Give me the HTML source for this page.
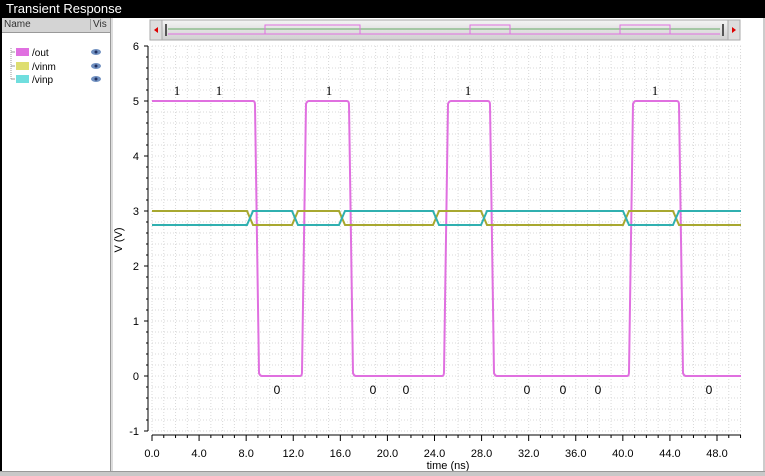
<!DOCTYPE html>
<html><head><meta charset="utf-8"><style>
body{margin:0;width:765px;height:475px;overflow:hidden;background:#fff;font-family:"Liberation Sans",sans-serif;position:relative}
#title{position:absolute;left:0;top:0;width:765px;height:18px;background:#000;color:#fff;font-size:13px;line-height:18px;padding-left:6px;box-sizing:border-box}
#left{position:absolute;left:0;top:18px;width:111px;height:454px;background:#fff;border-left:2px solid #000;border-right:1px solid #999;box-sizing:border-box}
#hdr{height:14px;background:#d4d4d4;border-bottom:1px solid #999;font-size:10px;color:#333;position:relative}
#bottom{position:absolute;left:0;top:471px;width:765px;height:4px;background:#c8c8c8;border-top:1px solid #999}
</style></head><body>
<div id="title">Transient Response</div>
<div id="left"><div id="hdr"><span style="position:absolute;left:2px;top:1px">Name</span><span style="position:absolute;left:88px;top:1px;border-left:1px solid #999;padding-left:2px">Vis</span></div></div>
<svg id="s" width="765" height="475" style="position:absolute;left:0;top:0" xmlns="http://www.w3.org/2000/svg"></svg>
<div id="bottom"></div>
<script>
var s='';
var leg=[['/out','#e070e0',52],['/vinm','#dede70',66],['/vinp','#70dede',79]];
s+='<path d="M11 48V79" stroke="#999" stroke-dasharray="1 1"/>';
leg.forEach(function(l){s+='<path d="M11 '+l[2]+'H15" stroke="#999"/><rect x="16" y="'+(l[2]-4)+'" width="13" height="8" fill="'+l[1]+'"/><text x="32" y="'+(l[2]+4)+'" font-size="10" fill="#000">'+l[0]+'</text><ellipse cx="96" cy="'+l[2]+'" rx="5" ry="3" fill="#7090c0"/><circle cx="96" cy="'+l[2]+'" r="1.5" fill="#203060"/>';});
s+='<defs><linearGradient id="sg" x1="0" y1="0" x2="0" y2="1"><stop offset="0" stop-color="#f4f4f4"/><stop offset="1" stop-color="#cfcfcf"/></linearGradient></defs>';
s+='<rect x="150" y="20" width="590" height="20" rx="3" fill="url(#sg)" stroke="#aaa"/><rect x="150" y="20" width="12" height="20" fill="#ddd" stroke="#aaa"/><path d="M154 30l4-3v6z" fill="#d00"/><rect x="728" y="20" width="12" height="20" fill="#ddd" stroke="#aaa"/><path d="M736 30l-4-3v6z" fill="#d00"/><rect x="165" y="24" width="2" height="12" fill="#555"/><rect x="722" y="24" width="2" height="12" fill="#555"/>';
s+='<path d="M168 29H720" stroke="#6a6" stroke-width="1"/><path d="M168 34H720" stroke="#e070e0"/><path d="M168 34H265V25H360V34H470V25H510V34H620V25H670V34" stroke="#e070e0" fill="none"/>';
var X=function(t){return 152+t*565/48},Y=function(v){return 376-v*55};
var g='';
for(var t=0;t<=50;t+=1)g+='M'+X(t)+' 46V431';
for(var v=-1;v<=6.01;v+=0.2)g+='M152 '+Y(v)+'H741';
s+='<path d="'+g+'" stroke="#d8d8d8" stroke-width="1" stroke-dasharray="1 2"/>';
s+='<path d="M148 46V431M144 46H148M144 431H148M152 435H741" stroke="#000"/>';
var tk='';
for(var v=-1;v<=6;v+=0.2){var y=Y(v);tk+='M'+((Math.abs(v-Math.round(v))<0.01)?144:146)+' '+y+'H148';}
for(var t=0;t<=50;t+=1){tk+='M'+X(t)+' 435V'+(t%4==0?441:438);}
s+='<path d="'+tk+'" stroke="#000"/>';
for(var v=-1;v<=6;v++)s+='<text x="139" y="'+(Y(v)+4)+'" font-size="11" text-anchor="end">'+(v<0?'-1':v)+'</text>';
for(var t=0;t<=48;t+=4)s+='<text x="'+X(t)+'" y="457" font-size="11" text-anchor="middle">'+t.toFixed(1)+'</text>';
s+='<text x="448" y="469" font-size="11" text-anchor="middle">time (ns)</text>';
s+='<text x="122" y="240" font-size="11" text-anchor="middle" transform="rotate(-90 122 240)">V (V)</text>';
var hy=101,ly=376;
function fall(x){return 'H'+(x-2)+'Q'+x+' '+hy+' '+x+' '+(hy+4)+'L'+(x+4)+' '+(ly-3)+'Q'+(x+5)+' '+ly+' '+(x+7)+' '+ly;}
function rise(x){return 'H'+(x-2)+'Q'+x+' '+ly+' '+x+' '+(ly-4)+'L'+(x+4)+' '+(hy+3)+'Q'+(x+5)+' '+hy+' '+(x+7)+' '+hy;}
var p='M152 '+hy+fall(255)+rise(302)+fall(349)+rise(444)+fall(490)+rise(629)+fall(679)+'H741';
s+='<path d="'+p+'" stroke="#e070e0" stroke-width="2" fill="none"/>';
var cr=[247,292,339,433,481,623,673],a=211,b=225;
function sig(start){var cur=start,d='M152 '+cur;cr.forEach(function(c){d+='H'+c;cur=cur==a?b:a;d+='L'+(c+6)+' '+cur;});return d+'H741';}
s+='<path d="'+sig(a)+'" stroke="#a8a830" stroke-width="2" fill="none"/>';
s+='<path d="'+sig(b)+'" stroke="#30b0b0" stroke-width="2" fill="none"/>';
[177,219,329,468,655].forEach(function(x){s+='<text x="'+x+'" y="95" font-size="13" font-family="Liberation Serif" text-anchor="middle">1</text>';});
[277,373,406,527,563,598,709].forEach(function(x){s+='<text x="'+x+'" y="394" font-size="12" text-anchor="middle">0</text>';});
s+='<path d="M112 18V472" stroke="#bbb"/><path d="M764 18V472" stroke="#999" stroke-width="1"/>';
document.getElementById('s').innerHTML=s;
</script>
</body></html>
